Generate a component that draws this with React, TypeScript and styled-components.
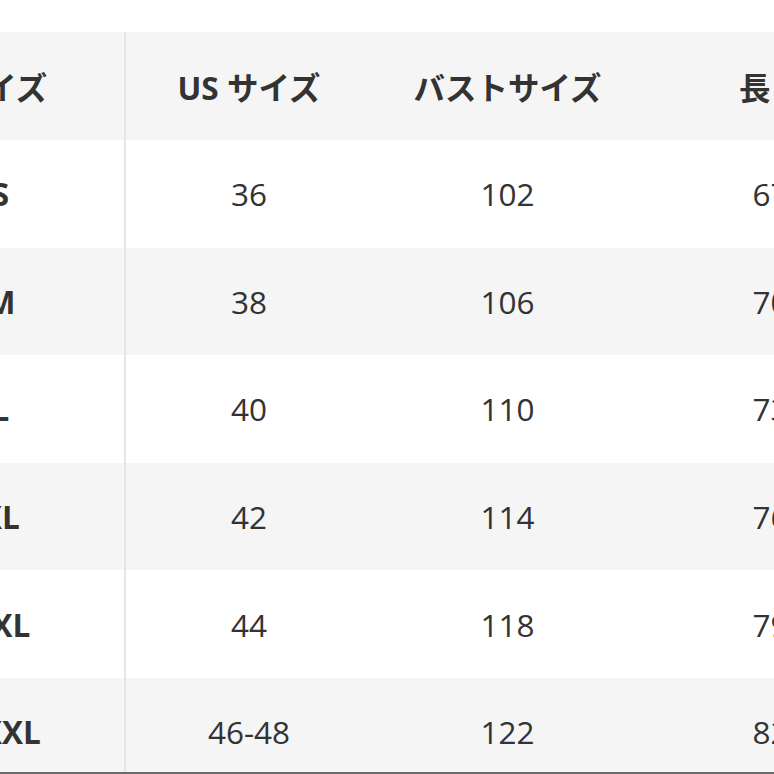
import React from "react";
import styled, { createGlobalStyle } from "styled-components";

const Global = createGlobalStyle`
  html, body { margin: 0; padding: 0; background: #ffffff; }
  body { font-family: "Open Sans", "Noto Sans CJK JP", sans-serif; color: #333333; }
`;

const Frame = styled.div`
  height: 774px;
  box-sizing: border-box;
  overflow: hidden;
  padding-top: 32px;
  border-bottom: 2px solid #6b6b6b;
`;

const Table = styled.table`
  border-collapse: collapse;
  table-layout: fixed;
  margin-left: -123px;
  width: 1021px;
`;

const Row = styled.tr<{ $shade: boolean }>`
  background: ${(p) => (p.$shade ? "#f5f5f6" : "#ffffff")};
`;

const HeadCell = styled.th<{ $first?: boolean }>`
  height: 108px;
  padding: 0;
  font-size: 31.5px;
  font-weight: 700;
  text-align: center;
  vertical-align: middle;
  white-space: nowrap;
  color: #333333;
  border-right: ${(p) => (p.$first ? "2px solid #e6e6e6" : "none")};
`;

const Cell = styled.td<{ $first?: boolean }>`
  height: 107.6px;
  padding: 0;
  font-size: 31.5px;
  font-weight: ${(p) => (p.$first ? 700 : 400)};
  text-align: center;
  vertical-align: middle;
  white-space: nowrap;
  color: #333333;
  border-right: ${(p) => (p.$first ? "2px solid #e6e6e6" : "none")};
`;

const widths = [248, 247, 271, 255];

const rows = [
  ["S", "36", "102", "67"],
  ["M", "38", "106", "70"],
  ["L", "40", "110", "73"],
  ["XL", "42", "114", "76"],
  ["XXL", "44", "118", "79"],
  ["XXXL", "46-48", "122", "82"],
];

export default function App() {
  return (
    <>
      <Global />
      <Frame>
        <Table>
          <colgroup>
            {widths.map((w, i) => (
              <col key={i} style={{ width: w }} />
            ))}
          </colgroup>
          <thead>
            <Row $shade>
              <HeadCell $first>サイズ</HeadCell>
              <HeadCell>US サイズ</HeadCell>
              <HeadCell>バストサイズ</HeadCell>
              <HeadCell>長さ</HeadCell>
            </Row>
          </thead>
          <tbody>
            {rows.map((r, i) => (
              <Row key={i} $shade={i % 2 === 1}>
                {r.map((c, j) => (
                  <Cell key={j} $first={j === 0}>
                    {c}
                  </Cell>
                ))}
              </Row>
            ))}
          </tbody>
        </Table>
      </Frame>
    </>
  );
}
